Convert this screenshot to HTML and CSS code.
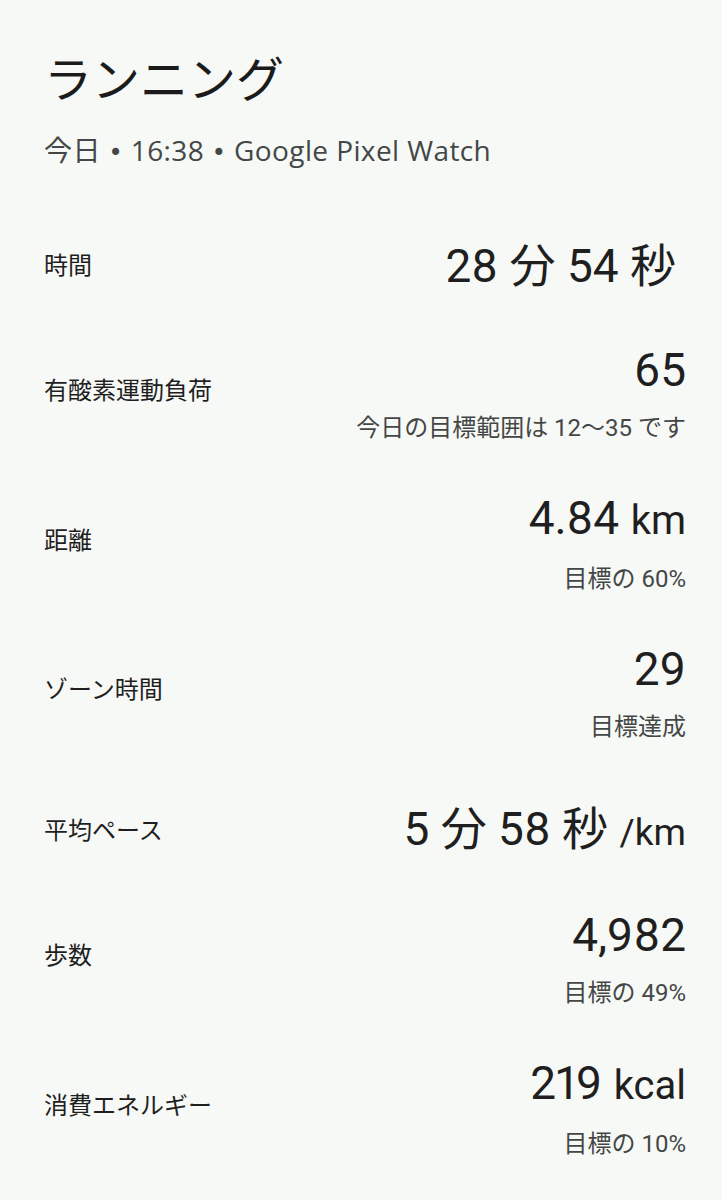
FILE: index.html
```html
<!DOCTYPE html>
<html lang="ja">
<head>
<meta charset="UTF-8">
<meta name="viewport" content="width=device-width,initial-scale=1.0">
<title>ランニング</title>
<link rel="stylesheet" href="styles.css">
</head>
<body>
<div class="page">
  <header class="head">
    <h1>ランニング</h1>
    <p class="meta">今日 <span class="dot">•</span> 16:38 <span class="dot">•</span> Google Pixel Watch</p>
  </header>
  <div class="stats">
    <div class="row">
      <div class="label">時間</div>
      <div class="val">
        <div class="num trail">28 <span class="cj">分</span> 54 <span class="cj">秒</span></div>
      </div>
    </div>
    <div class="row has-sub">
      <div class="label">有酸素運動負荷</div>
      <div class="val">
        <div class="num">65</div>
        <div class="sub">今日の目標範囲は 12〜35 です</div>
      </div>
    </div>
    <div class="row has-sub">
      <div class="label">距離</div>
      <div class="val">
        <div class="num">4.84 <span class="unit">km</span></div>
        <div class="sub">目標の 60%</div>
      </div>
    </div>
    <div class="row has-sub">
      <div class="label">ゾーン時間</div>
      <div class="val">
        <div class="num">29</div>
        <div class="sub">目標達成</div>
      </div>
    </div>
    <div class="row">
      <div class="label">平均ペース</div>
      <div class="val">
        <div class="num">5 <span class="cj">分</span> 58 <span class="cj">秒</span> <span class="small">/km</span></div>
      </div>
    </div>
    <div class="row has-sub">
      <div class="label">歩数</div>
      <div class="val">
        <div class="num">4,982</div>
        <div class="sub">目標の 49%</div>
      </div>
    </div>
    <div class="row has-sub">
      <div class="label">消費エネルギー</div>
      <div class="val">
        <div class="num">219 <span class="unit">kcal</span></div>
        <div class="sub">目標の 10%</div>
      </div>
    </div>
  </div>
</div>
</body>
</html>
```

FILE: styles.css
```css
body{margin:0;padding:0;background-color:#f7f9f6;font-family:Roboto,"Noto Sans CJK JP",sans-serif;color:#1f1f1f}
.page{padding:51px 36px 0 44px}
.head h1{margin:0;font-size:48px;font-weight:400;line-height:60px;color:#1b1b1b}
.meta{margin:21px 0 0;font-family:"Open Sans","Noto Sans CJK JP",sans-serif;font-size:28px;line-height:36px;letter-spacing:.4px;color:#444746}
.meta .dot{font-family:"DejaVu Sans",sans-serif;font-size:24px;line-height:1}
.stats{margin-top:39px}
.row{display:flex;align-items:center;justify-content:space-between;box-sizing:border-box;min-height:118px;padding:17px 0}
.label{font-size:24px;line-height:32px}
.has-sub .label{margin-bottom:16px}
.val{text-align:right}
.num{font-size:46px;line-height:56px;white-space:nowrap;font-feature-settings:"pnum"}
.num.trail{padding-right:10px}
.num .cj{font-size:46px}
.num .unit{font-size:40px}
.num .small{font-size:37px}
.sub{margin-top:2px;font-size:24px;line-height:56px;color:#444746}
```
